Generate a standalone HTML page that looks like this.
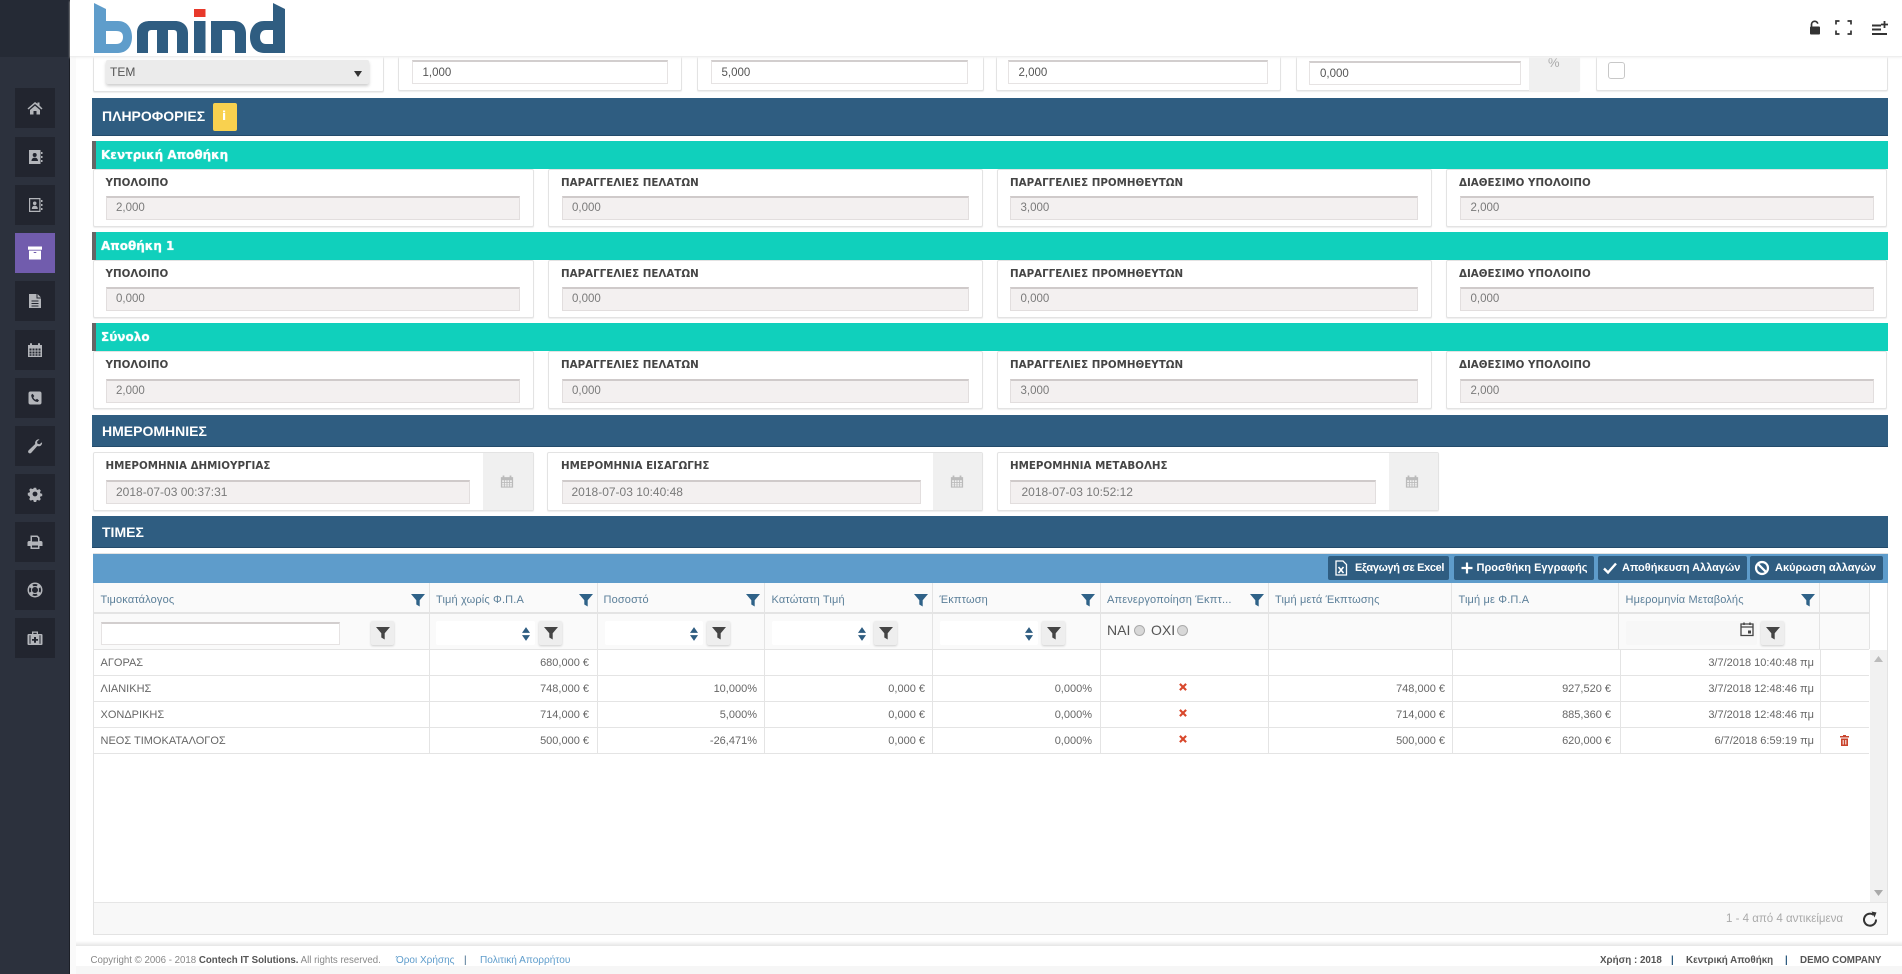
<!DOCTYPE html>
<html lang="el"><head><meta charset="utf-8"><title>bmind</title>
<style>
html,body{margin:0;padding:0;width:1902px;height:974px;overflow:hidden;background:#fff;font-family:"Liberation Sans","Noto Sans CJK JP",sans-serif}
div,span,svg{position:absolute;box-sizing:border-box}
.t{white-space:nowrap;line-height:16px;height:16px}
.r{text-align:right}
.btn{left:15px;width:40px;height:40px;background:#22252f}
.btn svg{left:12px;top:12px;width:16px;height:16px;fill:#b3b5ba}
.card{background:#fff;border:1px solid #e3e3e3;border-radius:2px;box-shadow:0 1px 1px #eee}
.blue{background:#2f5d81;left:92px;width:1796px;border-bottom:1px solid #244b6b}
.blue .t,.h{color:#fff;font-weight:bold;font-size:14px}
.teal{background:#10d0bc;left:92px;width:1796px;height:28px;border-left:4px solid #666}
.tt{color:#fff;font:bold 12px "DejaVu Sans",sans-serif;left:5px;top:7px;text-shadow:0 0 .8px #fff}
.lb{font:bold 10.3px/16px "DejaVu Sans",sans-serif;color:#454545;white-space:nowrap;height:16px}
.in{background:#f3f0f0;border:1px solid #e2dede;border-top:2px solid #cfcaca;height:24px}
.v{font-size:11.5px;color:#7a7a7a;white-space:nowrap;line-height:16px;height:16px}
.dt{font-size:12px}
.wi{background:#fff;border:1px solid #e6e3e3;border-top:2px solid #d2cece;height:24px}
.g{background:#e4e4e4}
.th{font-size:11px;color:#5b7f99;white-space:nowrap;line-height:16px;height:16px;top:592px;letter-spacing:.15px}
.d{font-size:11px;color:#666;white-space:nowrap;line-height:16px;height:16px}
.f{top:593px;width:14px;height:14px;fill:#2f6288}
.fb{top:621px;width:23px;height:24px;background:#eee;box-shadow:0 1px 2px #ccc;border-radius:2px}
.fb svg{left:5px;top:5px;width:14px;height:14px;fill:#444}
.ni{top:621px;height:24px;background:#fff;border-radius:2px}
.sp{top:627px;width:8px;height:14px;fill:#2f5d81}
.tb{top:556px;height:24px;background:#2f5d81;border-radius:2px}
.tb .t{color:#fff;font-weight:bold;font-size:11px;top:4px}
.tb svg{top:4px;width:16px;height:16px}
.x{width:8px;height:8px;left:1179px;stroke:#d8472b;stroke-width:2.4;fill:none}
.ft{font-size:9.7px;color:#888;white-space:nowrap;line-height:14px;height:14px;top:954px}
.fr{font-size:9.8px;font-weight:bold;color:#555;white-space:nowrap;line-height:14px;height:14px;top:954px}
</style></head><body>
<svg width="0" height="0" style="left:0;top:0"><defs>
<symbol id="fn" viewBox="0 0 14 14"><path d="M0 1H14L8.7 7.2V13.5L5.3 11.5V7.2Z"/></symbol>
<symbol id="sp" viewBox="0 0 7 12"><path d="M3.5 0L7 5H0ZM3.5 12L0 7H7Z"/></symbol>
</defs></svg>

<!-- gutter + sidebar -->
<div style="left:70px;top:0;width:6px;height:974px;background:#fafafa"></div>
<div style="left:0;top:0;width:70px;height:974px;background:#2c313d;border-right:1px solid #1c1f27"></div>
<div style="left:0;top:0;width:69px;height:57px;background:#252a35"></div>

<div class="btn" style="top:88px"><svg viewBox="0 0 16 16"><path d="M8 2L.5 8.5l1 1L8 4l6.500 5.500 1-1L12.500 5.500V2.500h-2v1.300zM3 10l5-4.300L13 10v4.500H9.500v-3.500h-3v3.500H3z"/></svg></div>
<div class="btn" style="top:136.500px"><svg viewBox="0 0 16 16"><path fill-rule="evenodd" d="M2 1h11.500v14H2zM7.700 4a2 2 0 100 4 2 2 0 000-4zM4.500 12h6.500c0-2-1.200-3.400-3.200-3.400S4.500 10 4.500 12z"/><path d="M14 3h1.500v2H14zM14 7h1.500v2H14zM14 11h1.500v2H14z"/></svg></div>
<div class="btn" style="top:185px"><svg viewBox="0 0 16 16"><path fill-rule="evenodd" d="M2 1h11.500v14H2zM3.200 2.200v11.600h9.100V2.200zM7.700 4.500a1.800 1.800 0 100 3.600 1.800 1.800 0 000-3.600zM4.800 12h6c0-2-1-3.300-3-3.300s-3 1.300-3 3.300z"/><path d="M14 3h1.500v2H14zM14 7h1.500v2H14zM14 11h1.500v2H14z"/></svg></div>
<div class="btn" style="top:233px;background:#715cad"><svg viewBox="0 0 16 16" style="fill:#fff"><path d="M1 1.500h14v3.200H1zM2 5.600h12V14.500H2z"/><rect x="6.700" y="7" width="2.600" height="1" fill="#715cad"/></svg></div>
<div class="btn" style="top:281px"><svg viewBox="0 0 16 16"><path fill-rule="evenodd" d="M2 1h7.500v4.500H14V15H2zM4.500 7.500v1h7v-1zM4.500 10v1h7v-1zM4.500 12.500v1h7v-1z"/><path d="M10.500 1L14 4.500h-3.500z"/></svg></div>
<div class="btn" style="top:329.500px"><svg viewBox="0 0 16 16"><path fill-rule="evenodd" d="M1 3h2V1.200h2V3h6V1.200h2V3h2v12H1zM2.500 6.500v2h2v-2zM5.500 6.500v2h2v-2zM8.500 6.500v2h2v-2zM11.500 6.500v2h2v-2zM2.500 9.500v2h2v-2zM5.500 9.500v2h2v-2zM8.500 9.500v2h2v-2zM11.500 9.500v2h2v-2zM2.500 12.200v1.500h2v-1.500zM5.500 12.200v1.500h2v-1.500zM8.500 12.200v1.500h2v-1.500zM11.500 12.200v1.500h2v-1.500z"/></svg></div>
<div class="btn" style="top:378px"><svg viewBox="0 0 16 16"><path fill-rule="evenodd" d="M3.500 1.500h9a2 2 0 012 2v9a2 2 0 01-2 2h-9a2 2 0 01-2-2v-9a2 2 0 012-2zM5.500 3.800L4.200 5c0 3.500 3 6.800 6.500 7l1.300-1.500-2-1.700-1.200 1C7.400 9.300 6.700 8.500 6.300 7.200l1-1.200z"/></svg></div>
<div class="btn" style="top:426px"><svg viewBox="0 0 16 16"><path d="M15 4.200c.5 2-1.200 4.300-3.600 4.100-.5 0-.8-.1-1.100-.3L4.300 14.700c-.8.900-2 .9-2.700.2s-.7-1.800.1-2.600L8.200 6c-.6-2.500 1.300-5 4.300-4.800L10 3.700l.5 2 2 .5z"/></svg></div>
<div class="btn" style="top:474px"><svg viewBox="0 0 16 16"><path fill-rule="evenodd" d="M6.700 1h2.600l.4 1.900 1.300.6 1.700-1 1.800 1.800-1 1.700.6 1.300 1.900.4v2.600l-1.900.4-.6 1.300 1 1.700-1.800 1.800-1.700-1-1.300.6-.4 1.900H6.700l-.4-1.900-1.300-.6-1.700 1-1.800-1.800 1-1.700-.6-1.300L0 9.400V6.800l1.900-.4.6-1.300-1-1.700L3.300 1.600l1.700 1 1.300-.6zM8 5.300a2.700 2.700 0 100 5.400 2.700 2.700 0 000-5.400z" transform="translate(.8 .8) scale(.9)"/></svg></div>
<div class="btn" style="top:522px"><svg viewBox="0 0 16 16"><path fill-rule="evenodd" d="M3.500 1.500h7L12.500 3.500V7h1.500c.8 0 1.500.7 1.500 1.500V12h-3v3h-9v-3H.5V8.500C.5 7.700 1.200 7 2 7h1.500zM5 3v4.500h6V4.200L9.800 3zM5 11.500v2h6v-2z"/></svg></div>
<div class="btn" style="top:570px"><svg viewBox="0 0 16 16"><path fill-rule="evenodd" d="M8 .5a7.500 7.500 0 100 15 7.500 7.500 0 000-15zM8 5a3 3 0 110 6 3 3 0 010-6zM5.200 2.700A6 6 0 0110.800 2.700L9.500 4.300a3.900 3.900 0 00-3 0zM13.300 5.200a6 6 0 010 5.600l-1.600-1.300a3.900 3.900 0 000-3zM10.800 13.300a6 6 0 01-5.600 0l1.300-1.600a3.900 3.900 0 003 0zM2.700 10.800a6 6 0 010-5.600l1.600 1.300a3.900 3.900 0 000 3z"/></svg></div>
<div class="btn" style="top:618px"><svg viewBox="0 0 16 16"><path fill-rule="evenodd" d="M5 1.500h6V4h3.500c.5 0 1 .5 1 1v9c0 .5-.5 1-1 1h-13c-.5 0-1-.5-1-1V5c0-.5.500-1 1-1H5zM6.300 2.800V4h3.400V2.800zM7 7v2H5v1.800h2v2h2v-2h2V9H9V7zM2.500 5.200v8.600h1V5.200zM12.500 5.200v8.600h1V5.200z"/></svg></div>

<!-- top form row -->
<div class="card" style="left:92.500px;top:45px;width:291px;height:47px"></div>
<div style="left:106px;top:60px;width:263px;height:24px;background:#ebebeb;box-shadow:0 2px 3px #ccc;border-radius:2px"></div>
<span class="t" style="left:110px;top:64px;font-size:12px;color:#555">ΤΕΜ</span>
<svg style="left:354px;top:71px;width:8px;height:6px" viewBox="0 0 8 6"><path d="M0 0H8L4 6Z" fill="#333"/></svg>
<div class="card" style="left:398px;top:45px;width:284px;height:46px"></div>
<div class="wi" style="left:412px;top:60px;width:256px"></div><span class="v" style="left:422.500px;top:65px;color:#555">1,000</span>
<div class="card" style="left:697px;top:45px;width:287px;height:46px"></div>
<div class="wi" style="left:711px;top:60px;width:257px"></div><span class="v" style="left:721.500px;top:65px;color:#555">5,000</span>
<div class="card" style="left:996px;top:45px;width:285px;height:46px"></div>
<div class="wi" style="left:1008px;top:60px;width:260px"></div><span class="v" style="left:1018.500px;top:65px;color:#555">2,000</span>
<div class="card" style="left:1295.500px;top:45px;width:284px;height:46px"></div>
<div class="wi" style="left:1309px;top:61px;width:212px"></div><span class="v" style="left:1320px;top:66px;color:#555">0,000</span>
<div style="left:1528.500px;top:45px;width:51px;height:46px;background:#f0f0f0"></div>
<span class="t" style="left:1548px;top:55px;font-size:13px;color:#aaa">%</span>
<div class="card" style="left:1595.500px;top:45px;width:292px;height:46px"></div>
<div style="left:1608px;top:62px;width:17px;height:17px;border:1px solid #c8c8c8;border-radius:3px;background:#fff"></div>

<!-- ΠΛΗΡΟΦΟΡΙΕΣ -->
<div class="blue" style="top:98px;height:38px"><span class="t" style="left:10px;top:10px">ΠΛΗΡΟΦΟΡΙΕΣ</span></div>
<div style="left:213px;top:103px;width:24px;height:28px;background:#f9d14f;border-radius:2px"></div>
<span class="t" style="left:222px;top:108px;font:bold 12px/16px 'DejaVu Sans',sans-serif;color:#fff">i</span>

<!-- section 1 -->
<div class="teal" style="top:140.500px"><span class="tt t">Κεντρική Αποθήκη</span></div>
<div class="card" style="left:92.500px;top:169px;width:441px;height:58px"></div>
<div class="card" style="left:548px;top:169px;width:435px;height:58px"></div>
<div class="card" style="left:997px;top:169px;width:434.500px;height:58px"></div>
<div class="card" style="left:1446px;top:169px;width:441px;height:58px"></div>
<span class="lb" style="left:105.500px;top:175px">ΥΠΟΛΟΙΠΟ</span><span class="lb" style="left:561px;top:175px">ΠΑΡΑΓΓΕΛΙΕΣ ΠΕΛΑΤΩΝ</span><span class="lb" style="left:1010px;top:175px">ΠΑΡΑΓΓΕΛΙΕΣ ΠΡΟΜΗΘΕΥΤΩΝ</span><span class="lb" style="left:1459px;top:175px">ΔΙΑΘΕΣΙΜΟ ΥΠΟΛΟΙΠΟ</span>
<div class="in" style="left:106px;top:196px;width:414px"></div><div class="in" style="left:561.500px;top:196px;width:407.500px"></div><div class="in" style="left:1010px;top:196px;width:408px"></div><div class="in" style="left:1460px;top:196px;width:414px"></div>
<span class="v" style="left:116px;top:200px">2,000</span><span class="v" style="left:572px;top:200px">0,000</span><span class="v" style="left:1020.500px;top:200px">3,000</span><span class="v" style="left:1470.500px;top:200px">2,000</span>

<!-- section 2 -->
<div class="teal" style="top:232px"><span class="tt t">Αποθήκη 1</span></div>
<div class="card" style="left:92.500px;top:260px;width:441px;height:58px"></div>
<div class="card" style="left:548px;top:260px;width:435px;height:58px"></div>
<div class="card" style="left:997px;top:260px;width:434.500px;height:58px"></div>
<div class="card" style="left:1446px;top:260px;width:441px;height:58px"></div>
<span class="lb" style="left:105.500px;top:266px">ΥΠΟΛΟΙΠΟ</span><span class="lb" style="left:561px;top:266px">ΠΑΡΑΓΓΕΛΙΕΣ ΠΕΛΑΤΩΝ</span><span class="lb" style="left:1010px;top:266px">ΠΑΡΑΓΓΕΛΙΕΣ ΠΡΟΜΗΘΕΥΤΩΝ</span><span class="lb" style="left:1459px;top:266px">ΔΙΑΘΕΣΙΜΟ ΥΠΟΛΟΙΠΟ</span>
<div class="in" style="left:106px;top:287px;width:414px"></div><div class="in" style="left:561.500px;top:287px;width:407.500px"></div><div class="in" style="left:1010px;top:287px;width:408px"></div><div class="in" style="left:1460px;top:287px;width:414px"></div>
<span class="v" style="left:116px;top:291px">0,000</span><span class="v" style="left:572px;top:291px">0,000</span><span class="v" style="left:1020.500px;top:291px">0,000</span><span class="v" style="left:1470.500px;top:291px">0,000</span>

<!-- section 3 -->
<div class="teal" style="top:323px"><span class="tt t">Σύνολο</span></div>
<div class="card" style="left:92.500px;top:351px;width:441px;height:58px"></div>
<div class="card" style="left:548px;top:351px;width:435px;height:58px"></div>
<div class="card" style="left:997px;top:351px;width:434.500px;height:58px"></div>
<div class="card" style="left:1446px;top:351px;width:441px;height:58px"></div>
<span class="lb" style="left:105.500px;top:357px">ΥΠΟΛΟΙΠΟ</span><span class="lb" style="left:561px;top:357px">ΠΑΡΑΓΓΕΛΙΕΣ ΠΕΛΑΤΩΝ</span><span class="lb" style="left:1010px;top:357px">ΠΑΡΑΓΓΕΛΙΕΣ ΠΡΟΜΗΘΕΥΤΩΝ</span><span class="lb" style="left:1459px;top:357px">ΔΙΑΘΕΣΙΜΟ ΥΠΟΛΟΙΠΟ</span>
<div class="in" style="left:106px;top:379px;width:414px"></div><div class="in" style="left:561.500px;top:379px;width:407.500px"></div><div class="in" style="left:1010px;top:379px;width:408px"></div><div class="in" style="left:1460px;top:379px;width:414px"></div>
<span class="v" style="left:116px;top:383px">2,000</span><span class="v" style="left:572px;top:383px">0,000</span><span class="v" style="left:1020.500px;top:383px">3,000</span><span class="v" style="left:1470.500px;top:383px">2,000</span>

<!-- ΗΜΕΡΟΜΗΝΙΕΣ -->
<div class="blue" style="top:415px;height:32px"><span class="t" style="left:10px;top:8px">ΗΜΕΡΟΜΗΝΙΕΣ</span></div>
<div class="card" style="left:92.500px;top:452px;width:441px;height:59px"></div>
<div class="card" style="left:547px;top:452px;width:436px;height:59px"></div>
<div class="card" style="left:997px;top:452px;width:442px;height:59px"></div>
<div style="left:483px;top:453px;width:50px;height:57px;background:#f0f0f0"></div>
<div style="left:933px;top:453px;width:49px;height:57px;background:#f0f0f0"></div>
<div style="left:1389px;top:453px;width:49px;height:57px;background:#f0f0f0"></div>
<span class="lb" style="left:105.500px;top:458px">ΗΜΕΡΟΜΗΝΙΑ ΔΗΜΙΟΥΡΓΙΑΣ</span><span class="lb" style="left:561px;top:458px">ΗΜΕΡΟΜΗΝΙΑ ΕΙΣΑΓΩΓΗΣ</span><span class="lb" style="left:1010px;top:458px">ΗΜΕΡΟΜΗΝΙΑ ΜΕΤΑΒΟΛΗΣ</span>
<div class="in" style="left:106px;top:480px;width:364px"></div><div class="in" style="left:561.500px;top:480px;width:359.500px"></div><div class="in" style="left:1010px;top:480px;width:366px"></div>
<span class="v dt" style="left:116px;top:484px">2018-07-03 00:37:31</span><span class="v dt" style="left:571.500px;top:484px">2018-07-03 10:40:48</span><span class="v dt" style="left:1021.500px;top:484px">2018-07-03 10:52:12</span>
<svg style="left:500px;top:474px;width:14px;height:15px;fill:#bbb" viewBox="0 0 16 16"><path fill-rule="evenodd" d="M1 3h2V1.200h2V3h6V1.200h2V3h2v12H1zM2.500 6.500v2h2v-2zM5.500 6.500v2h2v-2zM8.500 6.500v2h2v-2zM11.500 6.500v2h2v-2zM2.500 9.500v2h2v-2zM5.500 9.500v2h2v-2zM8.500 9.500v2h2v-2zM11.500 9.500v2h2v-2zM2.500 12.200v1.500h2v-1.500zM5.500 12.200v1.500h2v-1.500zM8.500 12.200v1.500h2v-1.500zM11.500 12.200v1.500h2v-1.500z"/></svg>
<svg style="left:950px;top:474px;width:14px;height:15px;fill:#bbb" viewBox="0 0 16 16"><path fill-rule="evenodd" d="M1 3h2V1.200h2V3h6V1.200h2V3h2v12H1zM2.500 6.500v2h2v-2zM5.500 6.500v2h2v-2zM8.500 6.500v2h2v-2zM11.500 6.500v2h2v-2zM2.500 9.500v2h2v-2zM5.500 9.500v2h2v-2zM8.500 9.500v2h2v-2zM11.500 9.500v2h2v-2zM2.500 12.200v1.500h2v-1.500zM5.500 12.200v1.500h2v-1.500zM8.500 12.200v1.500h2v-1.500zM11.500 12.200v1.500h2v-1.500z"/></svg>
<svg style="left:1405px;top:474px;width:14px;height:15px;fill:#bbb" viewBox="0 0 16 16"><path fill-rule="evenodd" d="M1 3h2V1.200h2V3h6V1.200h2V3h2v12H1zM2.500 6.500v2h2v-2zM5.500 6.500v2h2v-2zM8.500 6.500v2h2v-2zM11.500 6.500v2h2v-2zM2.500 9.500v2h2v-2zM5.500 9.500v2h2v-2zM8.500 9.500v2h2v-2zM11.500 9.500v2h2v-2zM2.500 12.200v1.500h2v-1.500zM5.500 12.200v1.500h2v-1.500zM8.500 12.200v1.500h2v-1.500zM11.500 12.200v1.500h2v-1.500z"/></svg>

<!-- ΤΙΜΕΣ -->
<div class="blue" style="top:516px;height:32px"><span class="t" style="left:10px;top:8px">ΤΙΜΕΣ</span></div>

<!-- grid -->
<div style="left:93px;top:553px;width:1795px;height:382px;border:1px solid #e3e3e3;background:#fff"></div>
<div style="left:93px;top:554px;width:1795px;height:29px;background:#5e9ccb"></div>
<div class="tb" style="left:1328px;width:121px"><svg style="left:5px" viewBox="0 0 16 16"><path d="M3 1h7l3.500 3.500V15H3z" fill="none" stroke="#fff" stroke-width="1.300"/><path d="M5.500 7L10.500 13M10.500 7L5.500 13" stroke="#fff" stroke-width="1.600"/></svg><span class="t" style="left:27px;letter-spacing:-.35px">Εξαγωγή σε Excel</span></div>
<div class="tb" style="left:1453.500px;width:140px"><svg style="left:5px" viewBox="0 0 16 16"><path d="M8 2.500V13.500M2.500 8H13.500" stroke="#fff" stroke-width="2.200"/></svg><span class="t" style="left:23px">Προσθήκη Εγγραφής</span></div>
<div class="tb" style="left:1598px;width:149px"><svg style="left:4px" viewBox="0 0 16 16"><path d="M2 8.500L6 12.500L14 3.500" fill="none" stroke="#fff" stroke-width="2.400"/></svg><span class="t" style="left:24px">Αποθήκευση Αλλαγών</span></div>
<div class="tb" style="left:1750px;width:133px"><svg style="left:4px" viewBox="0 0 16 16"><circle cx="8" cy="8" r="6" fill="none" stroke="#fff" stroke-width="2.200"/><path d="M3.800 3.800L12.200 12.200" stroke="#fff" stroke-width="2.200"/></svg><span class="t" style="left:25px">Ακύρωση αλλαγών</span></div>

<div style="left:94px;top:583px;width:1775px;height:66px;background:#fafafa"></div>
<div class="g" style="left:94px;top:612px;width:1775px;height:2px"></div>
<div class="g" style="left:94px;top:649px;width:1775px;height:1px"></div>
<div class="g" style="left:94px;top:675px;width:1775px;height:1px"></div>
<div class="g" style="left:94px;top:701px;width:1775px;height:1px"></div>
<div class="g" style="left:94px;top:727px;width:1775px;height:1px"></div>
<div class="g" style="left:94px;top:753px;width:1775px;height:1px"></div>
<div class="g" style="left:429px;top:583px;width:1px;height:170px"></div>
<div class="g" style="left:597px;top:583px;width:1px;height:170px"></div>
<div class="g" style="left:764px;top:583px;width:1px;height:170px"></div>
<div class="g" style="left:932px;top:583px;width:1px;height:170px"></div>
<div class="g" style="left:1100px;top:583px;width:1px;height:170px"></div>
<div class="g" style="left:1268px;top:583px;width:1px;height:170px"></div>
<div class="g" style="left:1451px;top:583px;width:1px;height:66px"></div><div class="g" style="left:1452px;top:650px;width:1px;height:103px"></div>
<div class="g" style="left:1618px;top:583px;width:1px;height:66px"></div><div class="g" style="left:1620px;top:650px;width:1px;height:103px"></div>
<div class="g" style="left:1819px;top:583px;width:1px;height:66px"></div><div class="g" style="left:1820px;top:650px;width:1px;height:103px"></div>
<div class="g" style="left:1869px;top:583px;width:1px;height:66px"></div>

<span class="th" style="left:100.500px">Τιμοκατάλογος</span><span class="th" style="left:436px">Τιμή χωρίς Φ.Π.Α</span><span class="th" style="left:603.500px">Ποσοστό</span><span class="th" style="left:771.500px">Κατώτατη Τιμή</span><span class="th" style="left:939.500px">Έκπτωση</span><span class="th" style="left:1107px">Απενεργοποίηση Έκπτ...</span><span class="th" style="left:1275px">Τιμή μετά Έκπτωσης</span><span class="th" style="left:1458.500px">Τιμή με Φ.Π.Α</span><span class="th" style="left:1625.500px">Ημερομηνία Μεταβολής</span>
<svg class="f" style="left:411px"><use href="#fn"/></svg><svg class="f" style="left:579px"><use href="#fn"/></svg><svg class="f" style="left:746px"><use href="#fn"/></svg><svg class="f" style="left:914px"><use href="#fn"/></svg><svg class="f" style="left:1081px"><use href="#fn"/></svg><svg class="f" style="left:1250px"><use href="#fn"/></svg><svg class="f" style="left:1801px"><use href="#fn"/></svg>

<div class="wi" style="left:101px;top:621.500px;width:239px;height:23px"></div>
<div class="fb" style="left:371px"><svg><use href="#fn"/></svg></div>
<div class="ni" style="left:436px;width:99px"></div><svg class="sp" style="left:522px"><use href="#sp"/></svg><div class="fb" style="left:539px"><svg><use href="#fn"/></svg></div>
<div class="ni" style="left:604.500px;width:98.500px"></div><svg class="sp" style="left:690px"><use href="#sp"/></svg><div class="fb" style="left:707px"><svg><use href="#fn"/></svg></div>
<div class="ni" style="left:771.500px;width:98.500px"></div><svg class="sp" style="left:858px"><use href="#sp"/></svg><div class="fb" style="left:874px"><svg><use href="#fn"/></svg></div>
<div class="ni" style="left:939.500px;width:98.500px"></div><svg class="sp" style="left:1025px"><use href="#sp"/></svg><div class="fb" style="left:1042px"><svg><use href="#fn"/></svg></div>
<span class="t" style="left:1107px;top:622px;font-size:14px;color:#555">ΝΑΙ</span>
<div style="left:1133.500px;top:624.500px;width:11px;height:11px;border-radius:50%;background:#d8d8d8;border:1px solid #aaa"></div>
<span class="t" style="left:1151px;top:622px;font-size:14px;color:#555">ΟΧΙ</span>
<div style="left:1176.500px;top:624.500px;width:11px;height:11px;border-radius:50%;background:#d8d8d8;border:1px solid #aaa"></div>
<div class="ni" style="left:1625.500px;width:131.500px;background:#f7f7f7"></div>
<svg style="left:1739px;top:621px;width:16px;height:16px" viewBox="0 0 16 16"><path d="M2 3H14V14.500H2ZM2 6H14" fill="none" stroke="#444" stroke-width="1.300"/><path d="M5 1.500V4M11 1.500V4" stroke="#444" stroke-width="1.500"/><rect x="9" y="9.500" width="3" height="3" fill="#444"/></svg>
<div class="fb" style="left:1761px"><svg><use href="#fn"/></svg></div>

<span class="d" style="left:100.500px;top:655px">ΑΓΟΡΑΣ</span><span class="d" style="left:100.500px;top:681px">ΛΙΑΝΙΚΗΣ</span><span class="d" style="left:100.500px;top:707px">ΧΟΝΔΡΙΚΗΣ</span><span class="d" style="left:100.500px;top:733px">ΝΕΟΣ ΤΙΜΟΚΑΤΑΛΟΓΟΣ</span>
<span class="d r" style="left:489px;width:100px;top:655px">680,000 €</span><span class="d r" style="left:489px;width:100px;top:681px">748,000 €</span><span class="d r" style="left:489px;width:100px;top:707px">714,000 €</span><span class="d r" style="left:489px;width:100px;top:733px">500,000 €</span>
<span class="d r" style="left:657px;width:100px;top:681px">10,000%</span><span class="d r" style="left:657px;width:100px;top:707px">5,000%</span><span class="d r" style="left:657px;width:100px;top:733px">-26,471%</span>
<span class="d r" style="left:825px;width:100px;top:681px">0,000 €</span><span class="d r" style="left:825px;width:100px;top:707px">0,000 €</span><span class="d r" style="left:825px;width:100px;top:733px">0,000 €</span>
<span class="d r" style="left:992px;width:100px;top:681px">0,000%</span><span class="d r" style="left:992px;width:100px;top:707px">0,000%</span><span class="d r" style="left:992px;width:100px;top:733px">0,000%</span>
<svg class="x" style="top:682.500px" viewBox="0 0 9 9"><path d="M1 1L8 8M8 1L1 8"/></svg><svg class="x" style="top:708.500px" viewBox="0 0 9 9"><path d="M1 1L8 8M8 1L1 8"/></svg><svg class="x" style="top:734.500px" viewBox="0 0 9 9"><path d="M1 1L8 8M8 1L1 8"/></svg>
<span class="d r" style="left:1345px;width:100px;top:681px">748,000 €</span><span class="d r" style="left:1345px;width:100px;top:707px">714,000 €</span><span class="d r" style="left:1345px;width:100px;top:733px">500,000 €</span>
<span class="d r" style="left:1511px;width:100px;top:681px">927,520 €</span><span class="d r" style="left:1511px;width:100px;top:707px">885,360 €</span><span class="d r" style="left:1511px;width:100px;top:733px">620,000 €</span>
<span class="d r" style="left:1654px;width:160px;top:655px">3/7/2018 10:40:48 πμ</span><span class="d r" style="left:1654px;width:160px;top:681px">3/7/2018 12:48:46 πμ</span><span class="d r" style="left:1654px;width:160px;top:707px">3/7/2018 12:48:46 πμ</span><span class="d r" style="left:1654px;width:160px;top:733px">6/7/2018 6:59:19 πμ</span>
<svg style="left:1840px;top:735px;width:9px;height:11px" viewBox="0 0 9 11"><path fill-rule="evenodd" d="M3 0H6V1H9V2.500H0V1H3ZM1 3.500H8V11H1ZM2.700 5V9.500H3.700V5ZM5.300 5V9.500H6.300V5Z" fill="#c9432c"/></svg>

<div style="left:1870px;top:650px;width:17px;height:252px;background:#f1f1f1"></div>
<svg style="left:1874px;top:656px;width:9px;height:6px" viewBox="0 0 9 6"><path d="M4.500 0L9 6H0Z" fill="#bbb"/></svg>
<svg style="left:1874px;top:890px;width:9px;height:6px" viewBox="0 0 9 6"><path d="M0 0H9L4.500 6Z" fill="#aaa"/></svg>
<div style="left:94px;top:902px;width:1793px;height:32px;background:#f8f8f8;border-top:1px solid #e6e6e6"></div>
<span class="t" style="left:1726px;top:911px;font-size:11.500px;color:#aaa">1 - 4 από 4 αντικείμενα</span>
<svg style="left:1862px;top:911px;width:16px;height:16px" viewBox="0 0 16 16"><path d="M11.500 3.800A6 6 0 1 0 14 8.500" fill="none" stroke="#333" stroke-width="2"/><path d="M9.500 0.500L14.500 1.500L12.500 6.500Z" fill="#333"/></svg>

<!-- footer -->
<div style="left:76px;top:941px;width:1826px;height:5px;background:linear-gradient(#fff,#e6e6e6)"></div>
<div style="left:76px;top:946px;width:1826px;height:20px;background:#fff"></div>
<div style="left:76px;top:966px;width:1826px;height:8px;background:#f6f6f6"></div>
<span class="ft" style="left:90.500px">Copyright © 2006 - 2018 <b style="color:#555">Contech IT Solutions.</b> All rights reserved.</span>
<span class="ft" style="left:396px;color:#5e9ccb;font-size:10px">Όροι Χρήσης</span><span class="ft" style="left:464px;color:#2f5d81">|</span><span class="ft" style="left:480px;color:#5e9ccb;font-size:10.100px">Πολιτική Απορρήτου</span>
<span class="fr" style="left:1600px">Χρήση : 2018</span><span class="fr" style="left:1671px;color:#2f5d81">|</span><span class="fr" style="left:1686px">Κεντρική Αποθήκη</span><span class="fr" style="left:1785px;color:#2f5d81">|</span><span class="fr" style="left:1800px">DEMO COMPANY</span>

<!-- header -->
<div style="left:70px;top:0;width:1832px;height:57px;background:#fff;border-bottom:1px solid #eee;box-shadow:0 1px 2px #f2f2f2"></div>
<svg style="left:0;top:0;width:300px;height:57px" viewBox="0 0 300 57" role="img" aria-label="bmind logo">
<path fill="#5f9dcb" fill-rule="evenodd" d="M94 3L106 9V21H118C127 21 132 28 132 37C132 46 127 53 118 53H94ZM106 31V44H116C121 44 123 41 123 37C123 33 121 31 116 31Z"/>
<path fill="#2f5d81" d="M137 53V33C137 25 142 21 150 21H175C183 21 188 26 188 33V53H177V34C177 31 176 30 173 30H168V53H157V30H152C149 30 148 31 148 34V53Z"/>
<rect x="194" y="21" width="11.500" height="32" fill="#2f5d81"/><rect x="194" y="9" width="11.500" height="8" fill="#e8392b"/>
<path fill="#2f5d81" d="M211 53V21H234C242 21 246 26 246 34V53H235V34C235 31 234 30 231 30H222V53Z"/>
<path fill="#2f5d81" fill-rule="evenodd" d="M273 3L285 9V53H264C255 53 250 46 250 37C250 28 255 21 264 21H273ZM273 30H266C262 30 260 33 260 37C260 41 262 44 266 44H273Z"/>
</svg>
<svg style="left:1809px;top:20px;width:12px;height:15px" viewBox="0 0 12 15"><path d="M2.500 7V4.500a3.200 3.200 0 016.300-.8" fill="none" stroke="#333" stroke-width="1.700"/><rect x="1" y="6.500" width="10" height="8" rx="1" fill="#333"/></svg>
<svg style="left:1835px;top:20px;width:17px;height:15px" viewBox="0 0 17 15"><path d="M1 4.500V1H4.500M12.500 1H16V4.500M16 10.500V14H12.500M4.500 14H1V10.500" fill="none" stroke="#333" stroke-width="1.700"/></svg>
<svg style="left:1871px;top:20px;width:18px;height:16px" viewBox="0 0 18 16"><path d="M1 5.500H10M1 9.500H10M1 14H16" stroke="#333" stroke-width="2"/><path d="M13.500 1V8M10 4.500H17" stroke="#333" stroke-width="1.800"/></svg>
</body></html>
